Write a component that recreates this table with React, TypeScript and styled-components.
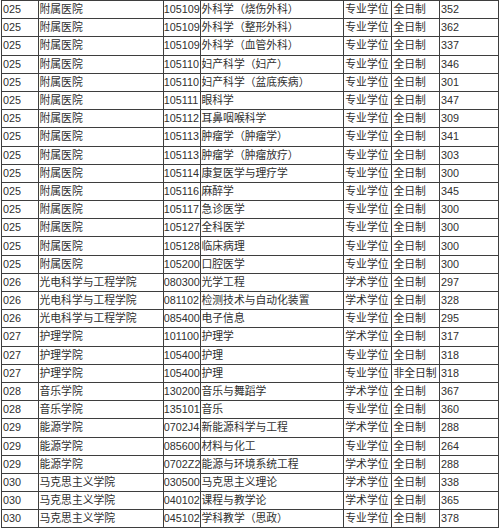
import React from "react";
import styled, { createGlobalStyle } from "styled-components";

const Global = createGlobalStyle`
  html, body { margin: 0; padding: 0; background: #ffffff; }
  body { width: 500px; height: 531px; overflow: hidden; }
`;

const Page = styled.div`
  padding: 0 0 0 1px;
  background: #fff;
`;

const Table = styled.table`
  border-collapse: collapse;
  table-layout: fixed;
  width: 497px;
  font-family: "Liberation Sans", "Noto Sans CJK SC", sans-serif;
  font-size: 10.8px;
  color: #2f2f2f;
`;

const Row = styled.tr`
  height: 18.2px;
`;

const Cell = styled.td<{ $pad?: number }>`
  border: 1px solid #3e3e3e;
  padding: 0 0 0 ${(p) => (p.$pad ?? 1)}px;
  height: 17.2px;
  line-height: 17px;
  white-space: nowrap;
  overflow: hidden;
  text-align: left;
  vertical-align: middle;
`;

type R = [string, string, string, string, string, string, string];

const rows: R[] = [
  ["025", "附属医院", "105109", "外科学（烧伤外科）", "专业学位", "全日制", "352"],
  ["025", "附属医院", "105109", "外科学（整形外科）", "专业学位", "全日制", "362"],
  ["025", "附属医院", "105109", "外科学（血管外科）", "专业学位", "全日制", "337"],
  ["025", "附属医院", "105110", "妇产科学（妇产）", "专业学位", "全日制", "346"],
  ["025", "附属医院", "105110", "妇产科学（盆底疾病）", "专业学位", "全日制", "301"],
  ["025", "附属医院", "105111", "眼科学", "专业学位", "全日制", "347"],
  ["025", "附属医院", "105112", "耳鼻咽喉科学", "专业学位", "全日制", "309"],
  ["025", "附属医院", "105113", "肿瘤学（肿瘤学）", "专业学位", "全日制", "341"],
  ["025", "附属医院", "105113", "肿瘤学（肿瘤放疗）", "专业学位", "全日制", "303"],
  ["025", "附属医院", "105114", "康复医学与理疗学", "专业学位", "全日制", "300"],
  ["025", "附属医院", "105116", "麻醉学", "专业学位", "全日制", "345"],
  ["025", "附属医院", "105117", "急诊医学", "专业学位", "全日制", "300"],
  ["025", "附属医院", "105127", "全科医学", "专业学位", "全日制", "300"],
  ["025", "附属医院", "105128", "临床病理", "专业学位", "全日制", "300"],
  ["025", "附属医院", "105200", "口腔医学", "专业学位", "全日制", "300"],
  ["026", "光电科学与工程学院", "080300", "光学工程", "学术学位", "全日制", "297"],
  ["026", "光电科学与工程学院", "081102", "检测技术与自动化装置", "学术学位", "全日制", "328"],
  ["026", "光电科学与工程学院", "085400", "电子信息", "专业学位", "全日制", "295"],
  ["027", "护理学院", "101100", "护理学", "学术学位", "全日制", "317"],
  ["027", "护理学院", "105400", "护理", "专业学位", "全日制", "318"],
  ["027", "护理学院", "105400", "护理", "专业学位", "非全日制", "318"],
  ["028", "音乐学院", "130200", "音乐与舞蹈学", "学术学位", "全日制", "367"],
  ["028", "音乐学院", "135101", "音乐", "专业学位", "全日制", "360"],
  ["029", "能源学院", "0702J4", "新能源科学与工程", "学术学位", "全日制", "288"],
  ["029", "能源学院", "085600", "材料与化工", "专业学位", "全日制", "264"],
  ["029", "能源学院", "0702Z2", "能源与环境系统工程", "学术学位", "全日制", "288"],
  ["030", "马克思主义学院", "030500", "马克思主义理论", "学术学位", "全日制", "338"],
  ["030", "马克思主义学院", "040102", "课程与教学论", "学术学位", "全日制", "365"],
  ["030", "马克思主义学院", "045102", "学科教学（思政）", "专业学位", "全日制", "378"],
];

const widths = [36.5, 125, 37.5, 143.3, 48.2, 47.5, 59];
const pads = [1, 1, 0.3, 0.5, 1, 1, 1];

export default function App() {
  return (
    <Page>
      <Global />
      <Table>
        <colgroup>
          {widths.map((w, i) => (
            <col key={i} style={{ width: w }} />
          ))}
        </colgroup>
        <tbody>
          {rows.map((r, i) => (
            <Row key={i}>
              {r.map((c, j) => (
                <Cell key={j} $pad={pads[j]}>
                  {c}
                </Cell>
              ))}
            </Row>
          ))}
        </tbody>
      </Table>
    </Page>
  );
}
